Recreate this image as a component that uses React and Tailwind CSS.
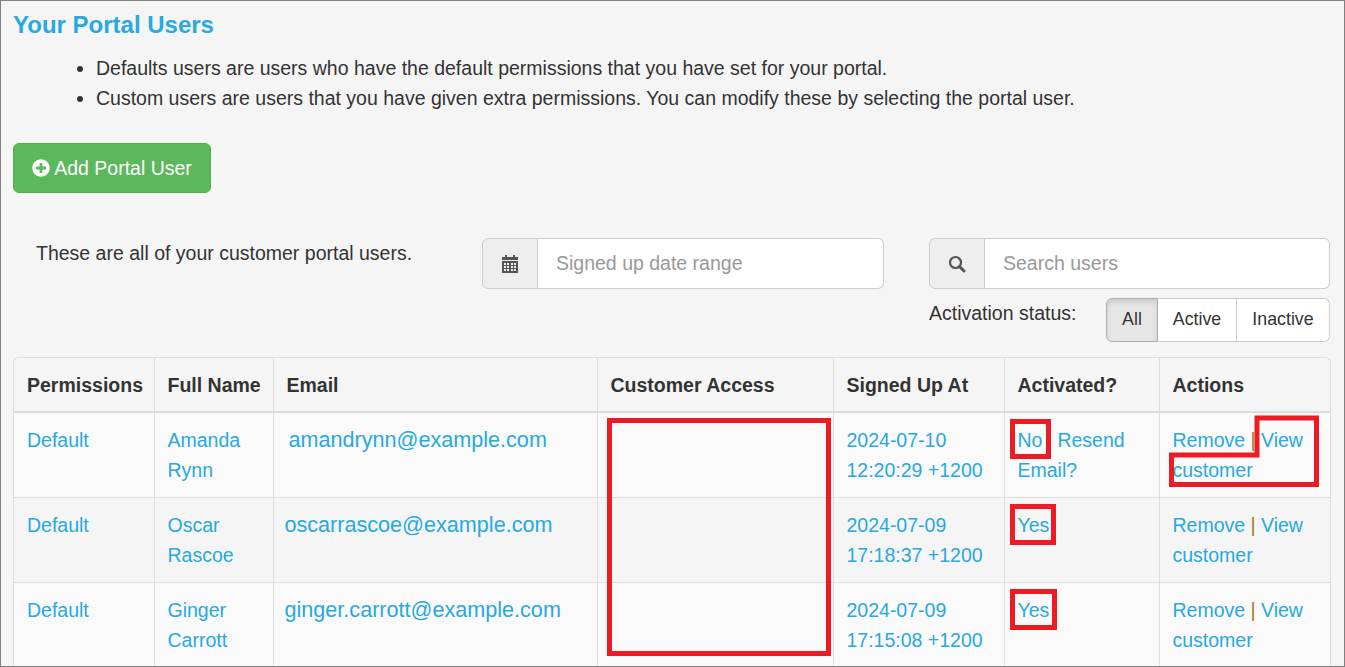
import React from 'react';
import { FaPlusCircle } from 'react-icons/fa';

const rows = [
  { first: 'Amanda', last: 'Rynn', email: 'amandrynn@example.com', emailClass: 'pl-[4px]', date: '2024-07-10', time: '12:20:29 +1200', bg: 'bg-[#fafafa]', activated: 'No', resend: true },
  { first: 'Oscar', last: 'Rascoe', email: 'oscarrascoe@example.com', emailClass: '', date: '2024-07-09', time: '17:18:37 +1200', bg: 'bg-[#f5f5f5]', activated: 'Yes' },
  { first: 'Ginger', last: 'Carrott', email: 'ginger.carrott@example.com', emailClass: '', date: '2024-07-09', time: '17:15:08 +1200', bg: 'bg-[#fafafa]', activated: 'Yes' },
];

const headers = ['Permissions', 'Full Name', 'Email', 'Customer Access', 'Signed Up At', 'Activated?', 'Actions'];

const CalendarIcon = () => (
  <svg viewBox="0 0 16 18" className="h-[18px] w-4 fill-[#555]">
    <rect x="3" y="0" width="2" height="3" />
    <rect x="11" y="0" width="2" height="3" />
    <rect x="0" y="2" width="16" height="3" />
    <path fillRule="evenodd" d="M0 6h16v12H0z M2 8v2h2V8z M5 8v2h2V8z M9 8v2h2V8z M12 8v2h2V8z M2 11v2h2v-2z M5 11v2h2v-2z M9 11v2h2v-2z M12 11v2h2v-2z M2 14v2h2v-2z M5 14v2h2v-2z M9 14v2h2v-2z M12 14v2h2v-2z" />
  </svg>
);

const SearchIcon = () => (
  <svg viewBox="0 0 18 18" className="h-[18px] w-[18px]" fill="none" stroke="#555">
    <circle cx="7.5" cy="7.5" r="5.5" strokeWidth="2.2" />
    <path d="M11.5 11.5L16 16" strokeWidth="3" strokeLinecap="round" />
  </svg>
);

const Mark = ({ className }) => (
  <div className={`absolute border-[5px] border-[#ed1c24] ${className}`} />
);

const InputGroup = ({ icon, placeholder, className }) => (
  <div className={`flex h-[51px] ${className}`}>
    <span className="flex w-14 items-center justify-center rounded-l-[6px] border border-[#ccc] bg-[#eee] text-[#555]">{icon}</span>
    <input
      placeholder={placeholder}
      className="min-w-0 flex-1 rounded-r-[6px] border border-l-0 border-[#ccc] bg-white pr-[19px] pb-[2px] pl-[18px] text-[19.5px] text-[#555] placeholder:text-[#999]"
    />
  </div>
);

export default function App() {
  return (
    <div className="relative h-[667px] w-[1345px] overflow-hidden border border-[#808080] bg-[#f5f5f5] font-['Liberation_Sans',Arial,sans-serif] text-[19.5px] leading-[30px] text-[#333]">
      <div className="pl-3 pr-[14px]">
        <h3 className="pt-[8px] text-[24px] leading-[32px] font-bold text-[#27a9e1]">Your Portal Users</h3>

        <ul className="mt-[12px] list-disc pl-[83px]">
          <li>Defaults users are users who have the default permissions that you have set for your portal.</li>
          <li>Custom users are users that you have given extra permissions. You can modify these by selecting the portal user.</li>
        </ul>

        <button className="mt-[30px] flex h-[50px] w-[198px] items-center justify-center gap-[4px] rounded-[6px] border border-[#4cae4c] bg-[#5cb85c] text-[#fff]">
          <FaPlusCircle className="h-[18px] w-[18px]" />
          <span>Add Portal User</span>
        </button>

        <div className="mt-[45px] flex">
          <p className="w-[469px] pl-[23px]">These are all of your customer portal users.</p>
          <InputGroup icon={<CalendarIcon />} placeholder="Signed up date range" className="w-[402px]" />
          <div className="ml-[45px] w-[401px]">
            <InputGroup icon={<SearchIcon />} placeholder="Search users" className="w-full" />
            <div className="mt-[9px] flex items-start justify-between">
              <span>Activation status:</span>
              <div className="flex h-[44px] text-[17.8px]">
                <span className="flex w-[52px] items-center justify-center rounded-l-[6px] border border-[#adadad] bg-[#e6e6e6] pb-[2px] shadow-[inset_0_3px_5px_rgba(0,0,0,0.125)]">All</span>
                <span className="flex w-[79px] items-center justify-center border-y border-r border-[#ccc] bg-white pb-[2px]">Active</span>
                <span className="flex w-[93px] items-center justify-center rounded-r-[6px] border-y border-r border-[#ccc] bg-white pb-[2px]">Inactive</span>
              </div>
            </div>
          </div>
        </div>

        <div className="mt-[15px] w-[1318px] rounded-t-[6px] border border-b-0 border-[#ddd]">
          <table className="w-full table-fixed border-collapse">
            <colgroup>
              <col className="w-[140px]" />
              <col className="w-[119px]" />
              <col className="w-[324px]" />
              <col className="w-[236px]" />
              <col className="w-[171px]" />
              <col className="w-[155px]" />
              <col />
            </colgroup>
            <thead>
              <tr className="h-[54px]">
                {headers.map((h) => (
                  <th key={h} className="border-b-2 border-l border-[#ddd] pr-0 pl-[13px] text-left text-[19.5px] font-bold whitespace-nowrap first:border-l-0">{h}</th>
                ))}
              </tr>
            </thead>
            <tbody className="text-[#27a9e1]">
              {rows.map((r) => (
                <tr key={r.email} className={`h-[85px] ${r.bg}`}>
                  <td className="border-b border-[#ddd] py-3 pr-3 pl-[13px] align-top">Default</td>
                  <td className="border-b border-l border-[#ddd] py-3 pr-3 pl-[13px] align-top">{r.first}<br />{r.last}</td>
                  <td className="border-b border-l border-[#ddd] px-[11px] py-3 align-top"><span className={`text-[21.6px] ${r.emailClass}`}>{r.email}</span></td>
                  <td className="border-b border-l border-[#ddd] px-3 py-3 align-top" />
                  <td className="border-b border-l border-[#ddd] py-3 pr-3 pl-[13px] align-top">{r.date}<br />{r.time}</td>
                  <td className="border-b border-l border-[#ddd] py-3 pr-3 pl-[13px] align-top">
                    {r.activated}
                    {r.resend && <span className="ml-[15px]">Resend Email?</span>}
                  </td>
                  <td className="border-b border-l border-[#ddd] py-3 pr-3 pl-[13px] align-top">Remove <span className="text-[#a8761f]">|</span> View customer</td>
                </tr>
              ))}
            </tbody>
          </table>
        </div>
      </div>

      {/* red annotation boxes */}
      <Mark className="left-[606px] top-[417px] h-[238px] w-[224px]" />
      <Mark className="left-[1009px] top-[418px] h-[40px] w-[41px]" />
      <Mark className="left-[1009px] top-[503px] h-[41px] w-[46px]" />
      <Mark className="left-[1009px] top-[588px] h-[41px] w-[47px]" />
      <svg className="absolute left-[1167px] top-[414px]" width="152" height="74" fill="none" stroke="#ed1c24" strokeWidth="5">
        <path d="M89 3H148.5V69.5H3.5V40H89z" />
      </svg>
    </div>
  );
}
